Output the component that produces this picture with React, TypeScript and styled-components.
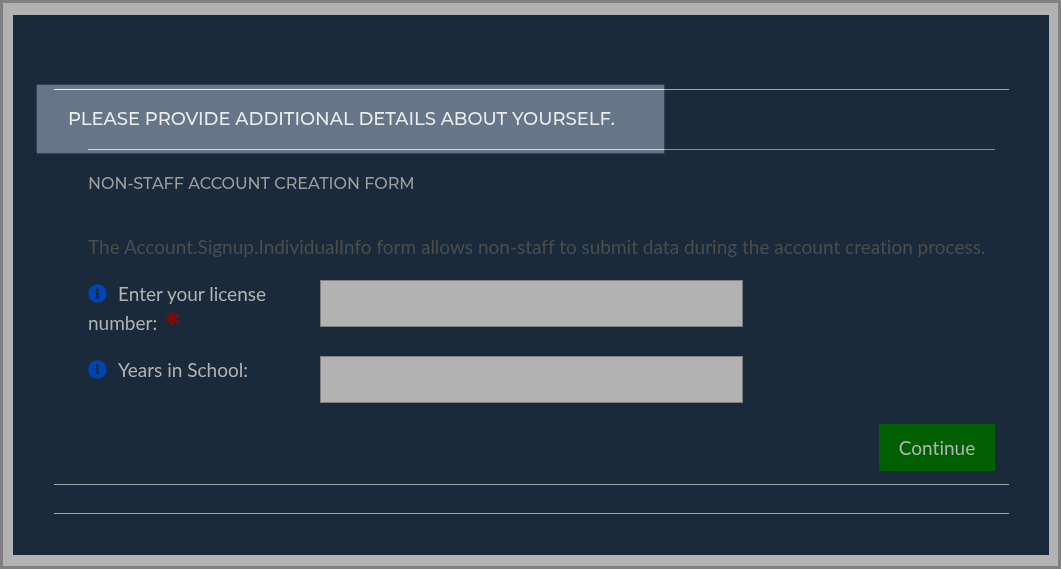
import React from "react";
import styled, { createGlobalStyle } from "styled-components";
import { FaInfoCircle } from "react-icons/fa";

const GlobalStyle = createGlobalStyle`
  *, *::before, *::after { box-sizing: border-box; }
  body {
    margin: 0;
    background: #b2b2b2;
    font-family: Lato, "Liberation Sans", sans-serif;
    font-size: 19px;
    line-height: 29px;
    font-variant-ligatures: none;
    color: #b2b2b2;
  }
`;

const Frame = styled.div`
  min-height: 100vh;
  display: flex;
  border: 3px solid #808080;
  padding: 12px 9px 11px 10px;
  background: #b2b2b2;
`;

const Page = styled.main`
  flex: 1;
  padding: 74px 40px 40px 41px;
  background: #1a2a3b;
`;

const Section = styled.section`
  position: relative;
  border-top: 1px solid #a3a3a3;
  border-bottom: 1px solid #a3a3a3;
  padding-bottom: 13px;
`;

const Highlight = styled.div`
  position: absolute;
  top: -5px;
  left: -17px;
  width: 627px;
  height: 68px;
  background: #4c4c4d;
  box-shadow: 0 0 2px #4c4c4d;
  mix-blend-mode: plus-lighter;
  pointer-events: none;
`;

const Title = styled.h1`
  margin: 0;
  padding: 15px 0 15px 14px;
  font: 500 18px/29px Montserrat, Inter, sans-serif;
  text-transform: uppercase;
  white-space: nowrap;
  color: #a0a0a0;
`;

const Form = styled.form`
  margin: 0 14px 0 34px;
  border-top: 1px solid #8c8c8c;
`;

const Subtitle = styled.h2`
  margin: 0;
  padding: 19px 0 34px;
  font: 500 16px/29px Montserrat, Inter, sans-serif;
  text-transform: uppercase;
  color: #9c9c9c;
`;

const Intro = styled.p`
  margin: 0 0 18px;
  color: #4c4c4c;
`;

const Row = styled.div`
  display: grid;
  grid-template-columns: 232px minmax(0, 423px);
  align-items: start;
  margin-bottom: 18px;

  &:last-of-type { margin-bottom: 21px; }
`;

const Label = styled.label`
  padding-right: 40px;
`;

const InfoIcon = styled(FaInfoCircle)`
  width: 19px;
  height: 19px;
  margin-right: 11px;
  vertical-align: -2px;
  color: #0044b3;
`;

const Star = styled.svg`
  width: 15px;
  height: 15px;
  margin-left: 3px;
  vertical-align: 4px;
`;

const Field = styled.input`
  width: 100%;
  height: 47px;
  margin: 1px 0 0;
  padding: 8px 12px;
  border: 1px solid #808080;
  border-radius: 0;
  background: #b2b2b2;
  font: inherit;
  color: #1a2a3b;
`;

const Actions = styled.footer`
  display: flex;
  justify-content: flex-end;
`;

const Submit = styled.button`
  width: 116px;
  height: 47px;
  padding: 0;
  border: 0;
  background: #005f00;
  font: inherit;
  font-variant-ligatures: none;
  color: #b2b2b2;
`;

const Divider = styled.hr`
  margin: 28px 0 0;
  border: 0;
  border-top: 1px solid #a3a3a3;
`;

function RequiredMark() {
  return (
    <Star viewBox="0 0 15 15" role="img" aria-label="required">
      <path
        d="M7.5 .8V14.2M1.6 4.1L13.4 10.9M1.6 10.9L13.4 4.1"
        fill="none"
        stroke="#990000"
        strokeWidth="2.4"
      />
    </Star>
  );
}

type FormRowProps = { id: string; label: string; required?: boolean };

function FormRow({ id, label, required = false }: FormRowProps) {
  return (
    <Row>
      <Label htmlFor={id}>
        <InfoIcon aria-hidden="true" />
        {label}
        {required && <> <RequiredMark /></>}
      </Label>
      <Field id={id} type="text" required={required} />
    </Row>
  );
}

export default function App() {
  return (
    <>
      <GlobalStyle />
      <Frame>
        <Page>
          <Section>
            <Title>Please provide additional details about yourself.</Title>
            <Form>
              <Subtitle>Non-Staff Account Creation Form</Subtitle>
              <Intro>
                The Account.Signup.IndividualInfo form allows non-staff to submit data during the
                account creation process.
              </Intro>
              <FormRow id="license" label="Enter your license number:" required />
              <FormRow id="years" label="Years in School:" />
              <Actions>
                <Submit type="submit">Continue</Submit>
              </Actions>
            </Form>
            <Highlight />
          </Section>
          <Divider />
        </Page>
      </Frame>
    </>
  );
}
